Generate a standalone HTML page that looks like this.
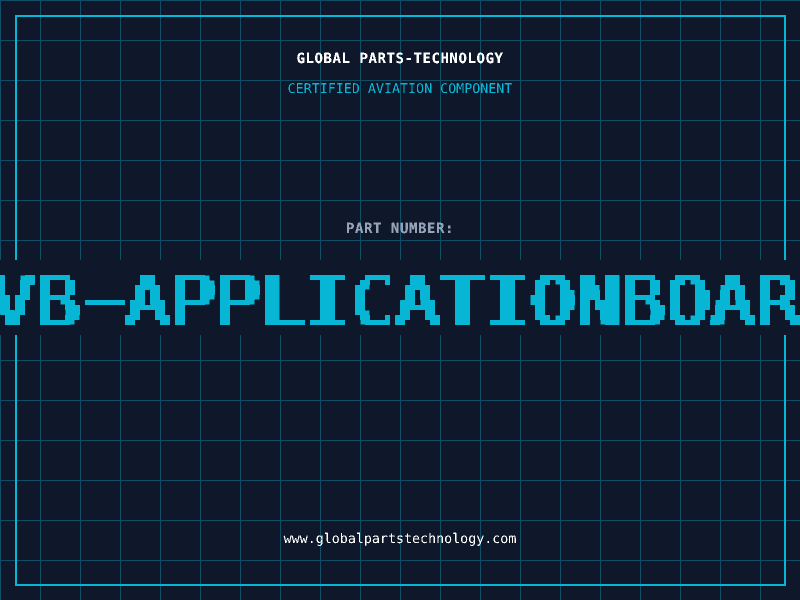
<!DOCTYPE html>
<html><head><meta charset="utf-8"><style>
html,body{margin:0;padding:0;width:800px;height:600px;overflow:hidden;background:#0f172a}
svg{display:block}
text{font-family:"DejaVu Sans Mono","Liberation Mono",monospace;text-rendering:geometricPrecision}
</style></head><body>
<svg width="800" height="600" viewBox="0 0 800 600" xmlns="http://www.w3.org/2000/svg">
<defs>
<pattern id="g" width="40" height="40" patternUnits="userSpaceOnUse">
<rect x="0" y="0" width="40" height="1" fill="#0e4f66"/>
<rect x="0" y="0" width="1" height="40" fill="#0e4f66"/>
</pattern>
<filter id="px" filterUnits="userSpaceOnUse" x="0" y="260" width="800" height="75" primitiveUnits="userSpaceOnUse" color-interpolation-filters="sRGB">
<feMorphology in="SourceGraphic" operator="dilate" radius="2 0" result="s"/>
<feFlood x="2" y="262" width="1" height="1" flood-color="#000"/>
<feComposite x="0" y="260" width="5" height="5"/>
<feTile x="0" y="260" width="800" height="75" result="t"/>
<feComposite in="s" in2="t" operator="in"/>
<feMorphology operator="dilate" radius="2"/>
<feComponentTransfer result="a"><feFuncA type="discrete" tableValues="0 1"/></feComponentTransfer>
<feFlood flood-color="#06b6d4"/>
<feComposite in2="a" operator="in"/>
</filter>
<filter id="th" color-interpolation-filters="sRGB" x="-5%" y="-30%" width="110%" height="160%">
<feComponentTransfer><feFuncA type="discrete" tableValues="0 1 1"/></feComponentTransfer>
</filter>
<filter id="th2" color-interpolation-filters="sRGB" x="-5%" y="-30%" width="110%" height="160%">
<feComponentTransfer><feFuncA type="discrete" tableValues="0 1"/></feComponentTransfer>
</filter>
</defs>
<rect width="800" height="600" fill="#0f172a"/>
<rect width="800" height="600" fill="url(#g)"/>
<rect x="16" y="16" width="769" height="569" fill="none" stroke="#06b6d4" stroke-width="2"/>
<text x="400" y="63" text-anchor="middle" font-size="14" letter-spacing="0.57" font-weight="700" fill="#ffffff" filter="url(#th)">GLOBAL PARTS-TECHNOLOGY</text>
<text x="400" y="93" text-anchor="middle" font-size="13.33" fill="#06b6d4" filter="url(#th2)">CERTIFIED AVIATION COMPONENT</text>
<text x="400" y="233" text-anchor="middle" font-size="14" letter-spacing="0.57" font-weight="700" fill="#94a3b8" filter="url(#th)">PART NUMBER:</text>
<rect x="0" y="260" width="800" height="75" fill="#0f172a"/>
<g filter="url(#px)" fill="#06b6d4" font-size="68.6">
<text transform="translate(-9.7,325) scale(1.09,1)">VB</text>
<text transform="translate(105,321.5) scale(1.9,1)" text-anchor="middle">-</text>
<text transform="translate(125.3,325) scale(1.09,1)">APPLICATIONBOARD</text>
</g>
<text x="400" y="543" text-anchor="middle" font-size="13.33" fill="#ffffff" filter="url(#th2)">www.globalpartstechnology.com</text>
</svg>
</body></html>
